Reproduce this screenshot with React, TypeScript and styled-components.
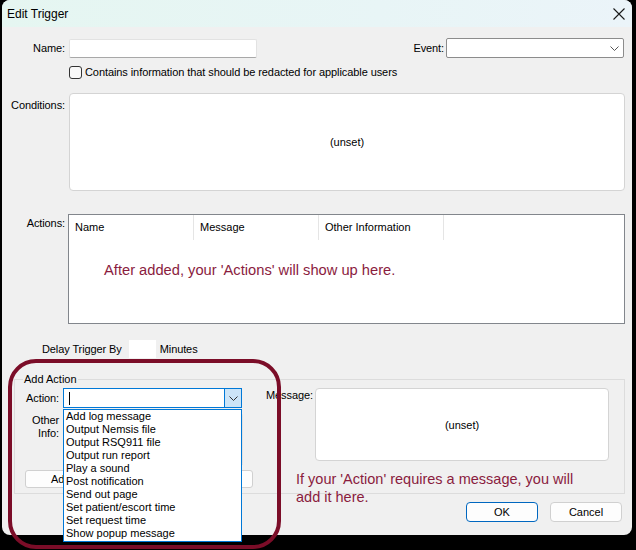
import React from "react"
import styled, { createGlobalStyle } from "styled-components"

const GlobalStyle = createGlobalStyle`
  body {
    margin: 0;
    background: #000;
    font-family: "Liberation Sans", Arial, sans-serif;
    font-size: 11px;
    color: #000;
  }
`

const actionTypes = [
  "Add log message",
  "Output Nemsis file",
  "Output RSQ911 file",
  "Output run report",
  "Play a sound",
  "Post notification",
  "Send out page",
  "Set patient/escort time",
  "Set request time",
  "Show popup message",
]

const Chevron = ({ color = "#333" }: { color?: string }) => (
  <svg width="9" height="5" viewBox="0 0 9 5">
    <path d="M0.5 0.5 L4.5 4.5 L8.5 0.5" fill="none" stroke={color} strokeWidth="1" />
  </svg>
)

const App = () => {
  return (
    <Screen>
      <GlobalStyle />
      <Window>
        <TitleBar>
          <Title>Edit Trigger</Title>
          <CloseButton>
            <svg width="12" height="12" viewBox="0 0 12 12">
              <path d="M0.5 0.5 L11.5 11.5 M11.5 0.5 L0.5 11.5" stroke="#1a1a1a" strokeWidth="1.1" />
            </svg>
          </CloseButton>
        </TitleBar>

        <Body>
          <Row $top={11} $align="center">
            <Label $width={63}>Name:</Label>
            <TextBox $width={188} $height={19} $gap={4} />
            <Spacer />
            <Label>Event:</Label>
            <ComboBox $width={178}>
              <ComboText />
              <ComboArrow>
                <Chevron color="#555" />
              </ComboArrow>
            </ComboBox>
          </Row>

          <CheckRow>
            <CheckBox />
            <span>Contains information that should be redacted for applicable users</span>
          </CheckRow>

          <Row $top={14}>
            <Label $width={63} $offset={6}>Conditions:</Label>
            <InfoBox $width={556} $height={98} $gap={4}>(unset)</InfoBox>
          </Row>

          <Row $top={23}>
            <Label $width={63} $offset={3}>Actions:</Label>
            <ListView>
              <ListHeader>
                <HeaderCell>Name</HeaderCell>
                <HeaderCell>Message</HeaderCell>
                <HeaderCell>Other Information</HeaderCell>
              </ListHeader>
              <Hint>After added, your 'Actions' will show up here.</Hint>
            </ListView>
          </Row>

          <DelayRow>
            <span>Delay Trigger By</span>
            <MinutesBox />
            <span>Minutes</span>
          </DelayRow>

          <GroupBox>
            <Legend>Add Action</Legend>
            <GroupColumns>
              <LeftColumn>
                <Row $align="center">
                  <Label $width={44}>Action:</Label>
                  <ActionCombo>
                    <Caret />
                    <ActionArrow>
                      <Chevron color="#333" />
                    </ActionArrow>
                    <DropList>
                      {actionTypes.map((t) => (
                        <DropItem key={t}>{t}</DropItem>
                      ))}
                    </DropList>
                  </ActionCombo>
                </Row>
                <Row $top={6}>
                  <Label $width={44}>
                    Other
                    <br />
                    Info:
                  </Label>
                  <TextBox $width={180} $height={51} $gap={4} />
                </Row>
                <AddButton>Add</AddButton>
              </LeftColumn>
              <Row>
                <Label $width={45} $offset={1}>Message:</Label>
                <InfoBox $width={294} $height={73} $gap={4}>(unset)</InfoBox>
              </Row>
            </GroupColumns>
          </GroupBox>

          <ButtonRow>
            <Button $primary>OK</Button>
            <Button>Cancel</Button>
          </ButtonRow>
        </Body>
      </Window>

      <Ring />
      <Note>
        If your 'Action' requires a message, you will
        <br />
        add it here.
      </Note>
    </Screen>
  )
}

const Screen = styled.div`
  position: relative;
  width: 636px;
  height: 550px;
  overflow: hidden;
  background: #000;
`

const Window = styled.div`
  margin-left: 2px;
  width: 630px;
  height: 535px;
  background: #f0f0f0;
  border-radius: 8px;
  display: flex;
  flex-direction: column;
`

const TitleBar = styled.div`
  height: 27px;
  flex: none;
  display: flex;
  align-items: center;
  justify-content: space-between;
  padding: 0 7px 0 5px;
  border-radius: 8px 8px 0 0;
  background: linear-gradient(90deg, #e5f6f1 0%, #e8f5f6 60%, #ebf4f9 100%);
`

const Title = styled.span`
  font-size: 12px;
`

const CloseButton = styled.div`
  display: flex;
  align-items: center;
  padding-top: 1px;
`

const Body = styled.div`
  display: flex;
  flex-direction: column;
  padding-right: 7px;
`

const Row = styled.div<{ $top?: number; $align?: string }>`
  display: flex;
  align-items: ${({ $align }) => $align || "flex-start"};
  margin-top: ${({ $top }) => $top || 0}px;
`

const Label = styled.div<{ $width?: number; $offset?: number }>`
  flex: none;
  width: ${({ $width }) => ($width ? `${$width}px` : "auto")};
  padding-top: ${({ $offset }) => $offset || 0}px;
  text-align: right;
  line-height: 13px;
  white-space: nowrap;
  letter-spacing: -0.1px;
`

const Spacer = styled.div`
  flex: 1;
`

const TextBox = styled.div<{ $width: number; $height: number; $gap?: number }>`
  flex: none;
  box-sizing: border-box;
  width: ${({ $width }) => $width}px;
  height: ${({ $height }) => $height}px;
  margin-left: ${({ $gap }) => $gap || 0}px;
  background: #fff;
  border: 1px solid #e2e2e2;
  border-bottom-color: #a8a8a8;
  border-radius: 2px;
`

const ComboBox = styled.div<{ $width: number }>`
  box-sizing: border-box;
  width: ${({ $width }) => $width}px;
  height: 20px;
  margin: 0 1px 0 2px;
  display: flex;
  background: #fff;
  border: 1px solid #8c8c8c;
  border-radius: 2px;
`

const ComboText = styled.div`
  flex: 1;
`

const ComboArrow = styled.div`
  width: 18px;
  display: flex;
  align-items: center;
  justify-content: center;
`

const CheckRow = styled.div`
  display: flex;
  align-items: center;
  gap: 3px;
  margin-top: 8px;
  padding-left: 67px;
  line-height: 13px;
  letter-spacing: -0.08px;
`

const CheckBox = styled.div`
  box-sizing: border-box;
  width: 13px;
  height: 13px;
  border: 1px solid #333;
  border-radius: 3px;
  background: #f8f8f8;
`

const InfoBox = styled.div<{ $width: number; $height: number; $gap?: number }>`
  flex: none;
  box-sizing: border-box;
  width: ${({ $width }) => $width}px;
  height: ${({ $height }) => $height}px;
  margin-left: ${({ $gap }) => $gap || 0}px;
  display: flex;
  align-items: center;
  justify-content: center;
  background: #fff;
  border: 1px solid #d4d4d4;
  border-radius: 4px;
`

const ListView = styled.div`
  box-sizing: border-box;
  width: 557px;
  height: 110px;
  margin-left: 3px;
  background: #fff;
  border: 1px solid #82868c;
`

const ListHeader = styled.div`
  display: flex;
  height: 25px;
`

const HeaderCell = styled.div`
  box-sizing: border-box;
  width: 125px;
  padding-left: 6px;
  line-height: 24px;
  border-right: 1px solid #e5e5e5;
`

const Hint = styled.div`
  padding: 22px 0 0 35px;
  font-size: 14.7px;
  line-height: 17px;
  color: #8a1c3e;
`

const DelayRow = styled.div`
  display: flex;
  align-items: center;
  margin-top: 16px;
  padding-left: 40px;
  height: 18px;
  letter-spacing: -0.1px;
`

const MinutesBox = styled.div`
  width: 27px;
  height: 18px;
  margin: 0 4px 0 7px;
  background: #fff;
`

const GroupBox = styled.fieldset`
  margin: 15px 0 0 12px;
  padding: 2px 0 5px 0;
  min-width: 0;
  border: 1px solid #dcdcdc;
`

const Legend = styled.legend`
  margin-left: 8px;
  padding: 0 1px;
  line-height: 13px;
`

const GroupColumns = styled.div`
  display: flex;
  gap: 13px;
`

const LeftColumn = styled.div`
  width: 238px;
  display: flex;
  flex-direction: column;
`

const ActionCombo = styled.div`
  position: relative;
  box-sizing: border-box;
  width: 179px;
  height: 20px;
  margin-left: 4px;
  display: flex;
  align-items: center;
  background: #fff;
  border: 1px solid #0078d7;
`

const Caret = styled.div`
  width: 1px;
  height: 13px;
  margin-left: 5px;
  background: #000;
  flex: none;
`

const ActionArrow = styled.div`
  margin-left: auto;
  box-sizing: border-box;
  width: 17px;
  height: 100%;
  display: flex;
  align-items: center;
  justify-content: center;
  background: #cce4f7;
  border-left: 1px solid #0078d7;
`

const DropList = styled.div`
  position: absolute;
  z-index: 2;
  top: 20px;
  left: -1px;
  box-sizing: border-box;
  width: 179px;
  padding: 0 0 1px 1px;
  background: #fff;
  border: 1px solid #0078d7;
`

const DropItem = styled.div`
  height: 13px;
  line-height: 13px;
  font-size: 11px;
  padding-left: 1px;
`

const AddButton = styled.div`
  box-sizing: border-box;
  width: 228px;
  height: 18px;
  margin: 5px 0 0 10px;
  padding-left: 25px;
  line-height: 16px;
  background: #fdfdfd;
  border: 1px solid #d0d0d0;
  border-radius: 3px;
`

const ButtonRow = styled.div`
  display: flex;
  justify-content: flex-end;
  gap: 12px;
  margin: 8px 3px 0 0;
`

const Button = styled.div<{ $primary?: boolean }>`
  box-sizing: border-box;
  width: 72px;
  height: 20px;
  display: flex;
  align-items: center;
  justify-content: center;
  background: #fdfdfd;
  border: 1px solid ${({ $primary }) => ($primary ? "#0067c0" : "#d0d0d0")};
  border-radius: 4px;
`

const Ring = styled.div`
  position: absolute;
  left: 8px;
  top: 359px;
  width: 273px;
  height: 190px;
  box-sizing: border-box;
  border: 4px solid #7b0d28;
  border-radius: 28px;
  pointer-events: none;
`

const Note = styled.div`
  position: absolute;
  left: 296px;
  top: 470px;
  font-size: 14.5px;
  line-height: 18px;
  color: #8a1c3e;
`

export default App
